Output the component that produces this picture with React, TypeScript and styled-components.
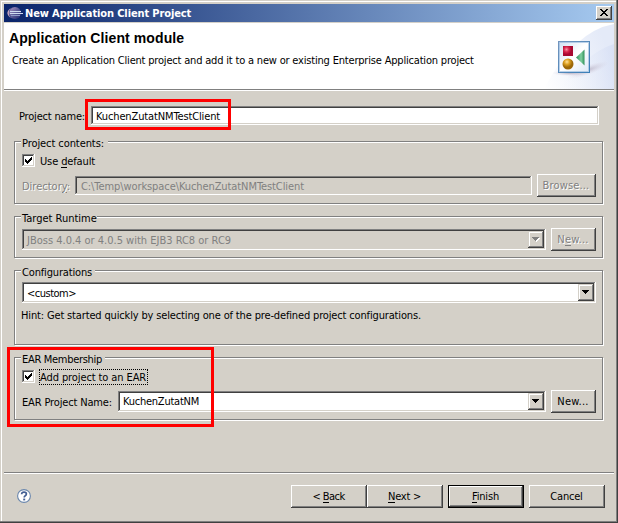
import React from 'react';
import styled, { createGlobalStyle, css } from 'styled-components';

const FACE = '#d4d0c8';
const SHADOW = '#808080';
const DARK = '#404040';

const GlobalStyle = createGlobalStyle`
  * { box-sizing: border-box; }
  body { margin: 0; background: ${FACE}; overflow: hidden; }
`;

const raised = css`
  background: ${FACE};
  box-shadow: inset -1px -1px 0 ${DARK}, inset 1px 1px 0 #fff, inset -2px -2px 0 ${SHADOW};
`;

const sunken = css`
  box-shadow: inset -1px -1px 0 #fff, inset 1px 1px 0 ${SHADOW},
    inset -2px -2px 0 ${FACE}, inset 2px 2px 0 ${DARK};
`;

const Dialog = styled.main`
  position: relative;
  display: flex;
  flex-direction: column;
  width: 618px;
  height: 523px;
  padding: 4px 4px 2px;
  background: ${FACE};
  box-shadow: inset -1px -1px 0 ${DARK}, inset -2px -2px 0 ${SHADOW},
    inset 1px 1px 0 ${FACE}, inset 2px 2px 0 #fff;
  font: 11px/13px 'DejaVu Sans Condensed', 'DejaVu Sans', sans-serif;
  color: #000;
`;

const Text = styled.span<{ $track?: number; $off?: boolean; $flat?: boolean }>`
  display: block;
  height: 13px;
  white-space: pre;
  letter-spacing: ${(p) => p.$track ?? 0}px;
  ${(p) => p.$off && css`color: ${SHADOW};`}
  ${(p) => p.$off && !p.$flat && css`text-shadow: 1px 1px 0 #fff;`}
`;

const Key = styled.span`
  box-shadow: 0 -1px 0 currentColor inset;
`;

const TitleBar = styled.header`
  display: flex;
  align-items: center;
  height: 18px;
  padding: 0 2px 0 3px;
  background: linear-gradient(90deg, #0a246a, #a6caf0);
  color: #fff;
`;

const Caption = styled.h1`
  flex: 1;
  margin: 0 0 0 1px;
  font: bold 11px/13px 'DejaVu Sans Condensed', 'DejaVu Sans', sans-serif;
  letter-spacing: -0.12px;
`;

const CloseButton = styled.button`
  ${raised}
  display: flex;
  justify-content: center;
  align-items: center;
  width: 16px;
  height: 14px;
  padding: 0 1px 1px 0;
  border: 0;
`;

const Banner = styled.section`
  display: flex;
  justify-content: space-between;
  height: 68px;
  margin-top: 1px;
  background: #fff;
  border-bottom: 1px solid #fff;
  box-shadow: inset 0 -1px 0 ${SHADOW};
`;

const BannerText = styled.div`
  padding: 7px 0 0 5px;
`;

const Heading = styled.h2`
  margin: 0;
  font: bold 14px/16px 'Liberation Sans', Arial, sans-serif;
  letter-spacing: 0.1px;
`;

const Summary = styled.div`
  padding: 8px 0 0 3px;
`;

const Content = styled.section`
  display: flex;
  flex-direction: column;
  gap: 12px;
  height: 381px;
  padding: 15px 0 0 10px;
`;

const NameRow = styled.div`
  display: flex;
  align-items: center;
  height: 19px;
  margin-bottom: 4px;
  padding-left: 5px;
`;

const NameLabel = styled.div`
  width: 72px;
  padding-top: 2px;
`;

const Field = styled.div<{ $width: number; $off?: boolean }>`
  ${sunken}
  display: flex;
  align-items: center;
  width: ${(p) => p.$width}px;
  height: 19px;
  padding: 2px 0 0 ${(p) => (p.$off ? 6 : 5)}px;
  background: ${(p) => (p.$off ? FACE : '#fff')};
`;

const Group = styled.section<{ $height: number }>`
  width: 589px;
  height: ${(p) => p.$height}px;
  padding-left: 7px;
  border: 1px solid ${SHADOW};
  box-shadow: 1px 1px 0 #fff, inset 1px 1px 0 #fff;
`;

const Legend = styled.div<{ $width: number }>`
  width: ${(p) => p.$width}px;
  height: 13px;
  margin: -5px 0 0 -1px;
  padding-left: 1px;
  background: ${FACE};
`;

const CheckRow = styled.div<{ $top: number }>`
  display: flex;
  align-items: flex-start;
  gap: 4px;
  margin-top: ${(p) => p.$top}px;
`;

const CheckBox = styled.span`
  ${sunken}
  display: flex;
  width: 13px;
  height: 13px;
  padding: 3px;
  background: #fff;
`;

const CheckLabel = styled.div<{ $focus?: boolean }>`
  height: 16px;
  margin: -1px 0 -2px;
  padding: 2px 1px 0;
  ${(p) => p.$focus && css`outline: 1px dotted #000; outline-offset: -1px; width: 109px;`}
`;

const Row = styled.div<{ $top: number }>`
  display: flex;
  align-items: center;
  gap: 5px;
  height: 23px;
  margin-top: ${(p) => p.$top}px;
`;

const RowLabel = styled.div<{ $width: number }>`
  width: ${(p) => p.$width}px;
  padding-top: 2px;
`;

const Combo = styled.div<{ $width: number; $off?: boolean; $top?: number }>`
  ${sunken}
  display: flex;
  align-items: center;
  justify-content: space-between;
  width: ${(p) => p.$width}px;
  height: 21px;
  margin-top: ${(p) => p.$top ?? 0}px;
  padding: 2px 2px 2px 5px;
  background: ${(p) => (p.$off ? FACE : '#fff')};
`;

const ListValue = styled.div`
  padding-top: 2px;
`;

const Drop = styled.span`
  display: flex;
  align-items: center;
  justify-content: center;
  width: 16px;
  height: 17px;
  background: ${FACE};
  box-shadow: inset -1px -1px 0 ${DARK}, inset 1px 1px 0 ${FACE},
    inset -2px -2px 0 ${SHADOW}, inset 2px 2px 0 #fff;
`;

const Hint = styled.div`
  margin: 6px 0 0 -1px;
`;

const Button = styled.button<{ $width: number; $primary?: boolean }>`
  ${raised}
  display: flex;
  align-items: center;
  justify-content: center;
  width: ${(p) => p.$width}px;
  height: 23px;
  padding: 0 1px 0 0;
  border: 0;
  font: inherit;
  color: inherit;
  ${(p) => p.$primary && css`border: 1px solid #000;`}
`;

const Footer = styled.footer`
  display: flex;
  align-items: flex-start;
  height: 49px;
  padding: 12px 9px 0 13px;
  border-top: 1px solid ${SHADOW};
  box-shadow: inset 0 1px 0 #fff;
`;

const HelpSlot = styled.div`
  flex: 1;
  padding-top: 4px;
  height: 20px;
`;

const ButtonPair = styled.div`
  display: flex;
  margin-right: 5px;
`;

const FinishSlot = styled.div`
  margin-right: 5px;
`;

const Marker = styled.div<{ $x: number; $y: number; $w: number; $h: number }>`
  position: absolute;
  left: ${(p) => p.$x}px;
  top: ${(p) => p.$y}px;
  width: ${(p) => p.$w}px;
  height: ${(p) => p.$h}px;
  border: 3px solid #f00;
`;

const Icon = styled.svg`
  display: block;
  flex: none;
`;

const EclipseIcon = () => (
  <Icon width="17" height="16" viewBox="0 0 17 16">
    <defs>
      <linearGradient id="ecl" x1="0" y1="0" x2="1" y2="1">
        <stop offset="0" stopColor="#b49ac4" />
        <stop offset=".5" stopColor="#5c5c98" />
        <stop offset="1" stopColor="#20246c" />
      </linearGradient>
    </defs>
    <circle cx="8" cy="8" r="6" fill="url(#ecl)" />
    <path d="M6.5 2 A6.2 6.2 0 0 0 6.5 14 Q1 12.5 .3 8 Q1 3.5 6.5 2" fill="#c9a5bd" />
    <path d="M3 6.5H14 M3 8.5H16" stroke="#cfdcf0" strokeWidth="1" />
    <path d="M4 10.5H13" stroke="#8f9cc8" strokeWidth="1" />
  </Icon>
);

const CloseGlyph = () => (
  <Icon width="8" height="7" viewBox="0 0 8 7" shapeRendering="crispEdges">
    <path d="M0 0h2v1h1v1h2v-1h1v-1h2v1h-1v1h-1v1h-1v1h1v1h1v1h1v1h-2v-1h-1v-1h-2v1h-1v1h-2v-1h1v-1h1v-1h1v-1h-1v-1h-1v-1h-1z" />
  </Icon>
);

const CheckGlyph = () => (
  <Icon width="7" height="7" viewBox="0 0 7 7" shapeRendering="crispEdges">
    <path d="M0 2h1v1h1v1h1v-1h1v-1h1v-1h1v-1h1v3h-1v1h-1v1h-1v1h-1v1h-1v-1h-1v-1h-1z" />
  </Icon>
);

const Arrow = ({ off }: { off?: boolean }) => (
  <Icon width="8" height="5" viewBox="0 0 8 5" shapeRendering="crispEdges">
    {off && <path d="M1 1h7v1h-1v1h-1v1h-1v1h-1v-1h-1v-1h-1v-1h-1z" fill="#fff" />}
    <path d="M0 0h7v1h-1v1h-1v1h-1v1h-1v-1h-1v-1h-1v-1h-1z" fill={off ? SHADOW : '#000'} />
  </Icon>
);

const BannerArt = () => (
  <Icon width="78" height="66" viewBox="0 0 78 66">
    <defs>
      <linearGradient id="wash" x1="0" y1="1" x2="1" y2=".6">
        <stop offset="0" stopColor="#fff" />
        <stop offset="1" stopColor="#e4eaf8" />
      </linearGradient>
      <linearGradient id="wash2" x1="0" y1=".5" x2="1" y2=".4">
        <stop offset="0" stopColor="#f4f7fd" stopOpacity="0" />
        <stop offset="1" stopColor="#d3dcf3" />
      </linearGradient>
      <radialGradient id="shade">
        <stop offset="0" stopColor="#a9a0b4" stopOpacity=".8" />
        <stop offset="1" stopColor="#d8d0e0" stopOpacity="0" />
      </radialGradient>
      <linearGradient id="pane" x1="0" y1="0" x2="1" y2="1">
        <stop offset="0" stopColor="#d0dff2" />
        <stop offset=".5" stopColor="#fff" />
        <stop offset="1" stopColor="#dce8f6" />
      </linearGradient>
      <linearGradient id="rim" x1="0" y1="0" x2="1" y2="1">
        <stop offset="0" stopColor="#7395be" />
        <stop offset="1" stopColor="#3a7fb8" />
      </linearGradient>
      <radialGradient id="red" cx=".35" cy=".35">
        <stop offset="0" stopColor="#f892a4" />
        <stop offset=".5" stopColor="#d8254c" />
        <stop offset="1" stopColor="#a80830" />
      </radialGradient>
      <radialGradient id="gold" cx=".4" cy=".3">
        <stop offset="0" stopColor="#ffe29a" />
        <stop offset=".5" stopColor="#dda020" />
        <stop offset="1" stopColor="#9c6808" />
      </radialGradient>
      <linearGradient id="green">
        <stop offset="0" stopColor="#2c8c58" />
        <stop offset=".6" stopColor="#80d0a0" />
        <stop offset="1" stopColor="#2f9058" />
      </linearGradient>
    </defs>
    <path d="M8 66 Q38 8 78 1 V66z" fill="url(#wash)" />
    <path d="M38 50 Q56 28 78 21 V66 H20z" fill="url(#wash2)" opacity=".6" />
    <ellipse cx="52" cy="47" rx="22" ry="5" fill="url(#shade)" transform="rotate(-20 52 47)" opacity=".8" />
    <ellipse cx="34" cy="50" rx="18" ry="3" fill="url(#shade)" />
    <rect x="22.5" y="18.5" width="31" height="31" fill="url(#pane)" stroke="url(#rim)" />
    <rect x="23.5" y="19.5" width="29" height="29" fill="none" stroke="#8fb4da" strokeOpacity=".6" />
    <rect x="27" y="23" width="10" height="10" fill="url(#red)" />
    <circle cx="32" cy="41" r="5.5" fill="url(#gold)" />
    <path d="M40 34.5 L48.5 26.5 V42.5z" fill="url(#green)" />
  </Icon>
);

const HelpIcon = () => (
  <Icon width="14" height="14" viewBox="0 0 14 14">
    <circle cx="7" cy="7" r="6.4" fill="#fff" stroke="#6a86ac" strokeWidth="1.1" />
    <path d="M4.6 5.3 Q4.6 3.2 7 3.2 Q9.4 3.2 9.4 5.1 Q9.4 6.2 8 7 Q7.2 7.5 7.2 8.6" fill="none" stroke="#435f94" strokeWidth="1.7" />
    <rect x="6.2" y="9.6" width="2" height="1.8" fill="#435f94" />
  </Icon>
);

export default function App() {
  return (
    <Dialog>
      <GlobalStyle />
      <TitleBar>
        <EclipseIcon />
        <Caption>New Application Client Project</Caption>
        <CloseButton aria-label="Close"><CloseGlyph /></CloseButton>
      </TitleBar>
      <Banner>
        <BannerText>
          <Heading>Application Client module</Heading>
          <Summary>
            <Text $track={-0.188}>Create an Application Client project and add it to a new or existing Enterprise Application project</Text>
          </Summary>
        </BannerText>
        <BannerArt />
      </Banner>
      <Content>
        <NameRow>
          <NameLabel><Text $track={-0.18}>Project name:</Text></NameLabel>
          <Field $width={508}><Text $track={-0.13}>KuchenZutatNMTestClient</Text></Field>
        </NameRow>
        <Group $height={63}>
          <Legend $width={87}><Text $track={-0.08}>Project contents:</Text></Legend>
          <CheckRow $top={4}>
            <CheckBox><CheckGlyph /></CheckBox>
            <CheckLabel><Text $track={-0.13}>Use <Key>d</Key>efault</Text></CheckLabel>
          </CheckRow>
          <Row $top={7}>
            <RowLabel $width={48}><Text $off>Director<Key>y</Key>:</Text></RowLabel>
            <Field $width={457} $off><Text $off $flat $track={-0.085}>C:\Temp\workspace\KuchenZutatNMTestClient</Text></Field>
            <Button $width={59}><Text $off $track={0.15}>Browse...</Text></Button>
          </Row>
        </Group>
        <Group $height={42}>
          <Legend $width={76}><Text>Target Runtime</Text></Legend>
          <Row $top={3}>
            <Combo $width={524} $off>
              <ListValue><Text $off $flat $track={0}>JBoss 4.0.4 or 4.0.5 with EJB3 RC8 or RC9</Text></ListValue>
              <Drop><Arrow off /></Drop>
            </Combo>
            <Button $width={45}><Text $off $track={0.25}>N<Key>e</Key>w...</Text></Button>
          </Row>
        </Group>
        <Group $height={75}>
          <Legend $width={74}><Text $track={-0.16}>Configurations</Text></Legend>
          <Combo $width={574} $top={3}>
            <ListValue><Text $track={-0.5}>&lt;custom&gt;</Text></ListValue>
            <Drop><Arrow /></Drop>
          </Combo>
          <Hint><Text $track={-0.15}>Hint: Get started quickly by selecting one of the pre-defined project configurations.</Text></Hint>
        </Group>
        <Group $height={63}>
          <Legend $width={84}><Text $track={-0.3}>EAR Membership</Text></Legend>
          <CheckRow $top={4}>
            <CheckBox><CheckGlyph /></CheckBox>
            <CheckLabel $focus><Text $track={-0.1}>Add project to an EAR</Text></CheckLabel>
          </CheckRow>
          <Row $top={7}>
            <RowLabel $width={91}><Text $track={-0.15}>EAR Project Name:</Text></RowLabel>
            <Combo $width={428}>
              <Text $track={-0.24}>KuchenZutatNM</Text>
              <Drop><Arrow /></Drop>
            </Combo>
            <Button $width={45}><Text $track={0.25}>New...</Text></Button>
          </Row>
        </Group>
      </Content>
      <Footer>
        <HelpSlot><HelpIcon /></HelpSlot>
        <ButtonPair>
          <Button $width={76}><Text $track={-0.55}>&lt; <Key>B</Key>ack</Text></Button>
          <Button $width={76}><Text $track={-0.25}><Key>N</Key>ext &gt;</Text></Button>
        </ButtonPair>
        <FinishSlot>
          <Button $width={76} $primary><Text $track={-0.17}><Key>F</Key>inish</Text></Button>
        </FinishSlot>
        <Button $width={76}><Text $track={-0.2}>Cancel</Text></Button>
      </Footer>
      <Marker $x={85} $y={99} $w={146} $h={31} />
      <Marker $x={7} $y={347} $w={207} $h={80} />
    </Dialog>
  );
}
